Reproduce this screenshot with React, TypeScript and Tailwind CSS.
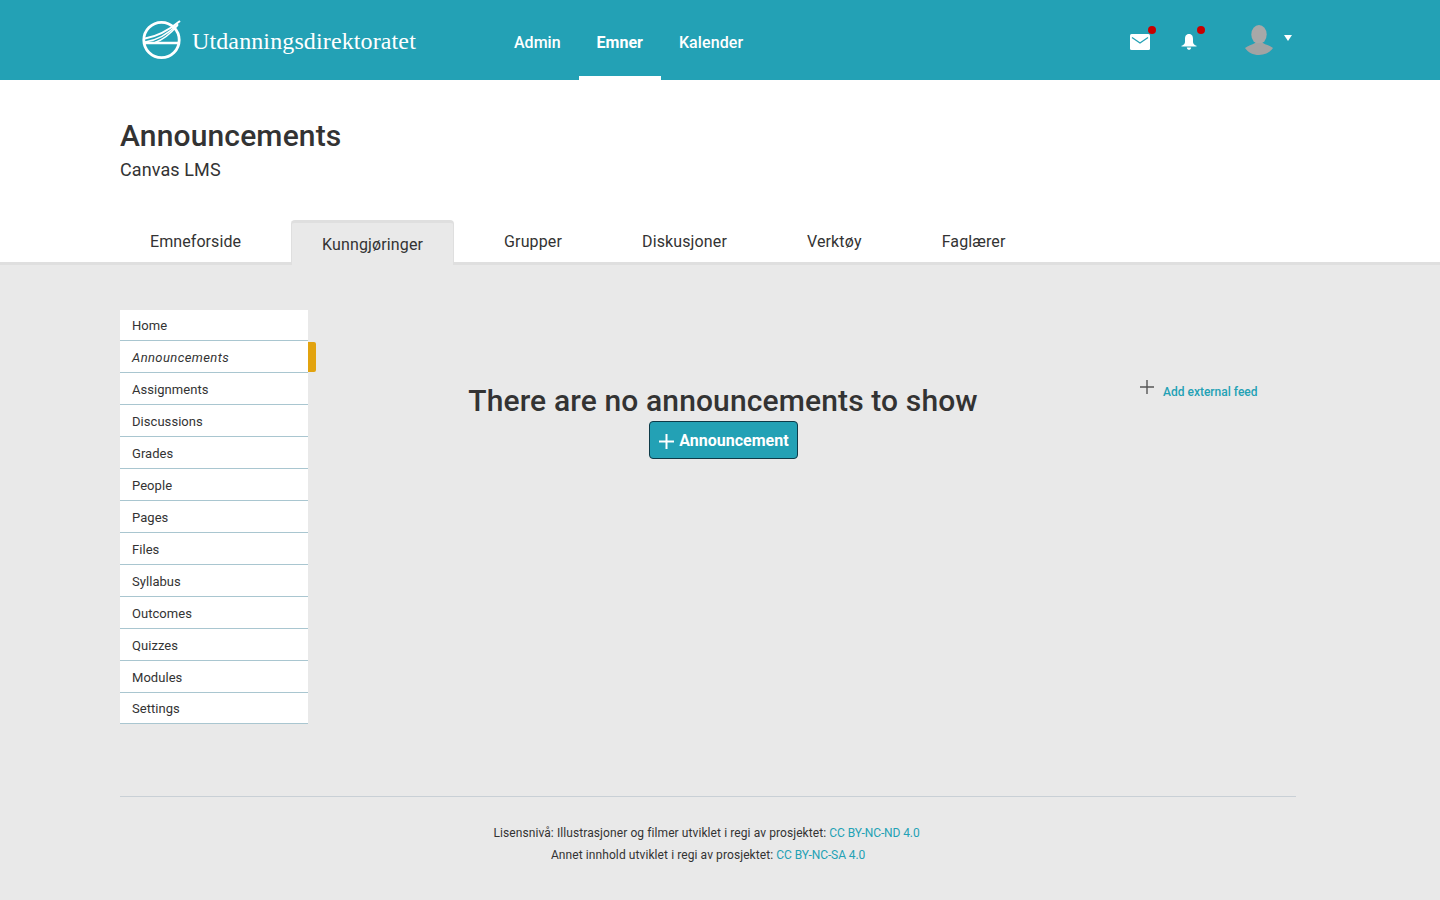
import React from 'react';

const courseLinks = ['Home', 'Announcements', 'Assignments', 'Discussions', 'Grades', 'People', 'Pages', 'Files', 'Syllabus', 'Outcomes', 'Quizzes', 'Modules', 'Settings'];
const tabs = ['Emneforside', 'Kunngjøringer', 'Grupper', 'Diskusjoner', 'Verktøy', 'Faglærer'];

const Logo = () => (
  <svg width="42" height="42" viewBox="0 0 42 42" fill="none" stroke="white">
    <circle cx="20.5" cy="21" r="17.7" strokeWidth="2.8" />
    <path d="M3 24 H38" strokeWidth="2.4" />
    <path d="M4 19.5 C16 17.5 28 11 39 2" strokeWidth="2" />
    <path d="M4 23 C16 21.5 28 14 37 5" strokeWidth="1.6" />
    <path d="M14 23.5 C23 20.5 31 13 37 6" strokeWidth="1.4" />
  </svg>
);

const MailIcon = () => (
  <svg width="20" height="16" viewBox="0 0 20 16">
    <rect width="20" height="16" rx="1.5" fill="white" />
    <path d="M2 3.5 L10 9 L18 3.5" fill="none" stroke="#23a1b5" strokeWidth="1.3" />
  </svg>
);

const BellIcon = () => (
  <svg width="16" height="16" viewBox="0 0 16 16" fill="white">
    <path d="M8 0 C4.8 0 4 2.6 4 5 V8 C4 10 2.6 11 0.5 11.8 V12.6 H15.5 V11.8 C13.4 11 12 10 12 8 V5 C12 2.6 11.2 0 8 0 Z" />
    <path d="M5.8 13.5 H10.2 C10 15 9 15.8 8 15.8 C7 15.8 6 15 5.8 13.5 Z" />
  </svg>
);

const Avatar = () => (
  <svg width="28" height="30" viewBox="0 0 28 30">
    <ellipse cx="14" cy="9.5" rx="7.7" ry="9.5" fill="#a8a8a8" />
    <path d="M0 23 C3 20.5 7 20 10 18 H18 C21 20 25 20.5 28 23 C25 27.5 20 30 14 30 C8 30 3 27.5 0 23 Z" fill="#a3a3a3" />
  </svg>
);

export default function App() {
  return (
    <div className="h-[900px] overflow-hidden flex flex-col bg-[#e9e9e9] text-[#333] font-['Roboto','Liberation_Sans',sans-serif]">
      {/* Top bar */}
      <header className="h-20 bg-[#23a1b5] shrink-0 flex text-white">
        <div className="flex items-center pl-[141px] w-[497px] shrink-0 gap-[9px]">
          <Logo />
          <span className="font-['Liberation_Serif',serif] text-[24px] tracking-[0.12px] leading-none mt-0.5">Utdanningsdirektoratet</span>
        </div>
        <nav className="flex text-[16px] font-medium">
          <a className="pl-[17px] pr-[18px] pt-[33px] leading-5">Admin</a>
          <a className="px-[18px] pt-[33px] leading-5 border-b-[4px] border-white font-bold">Emner</a>
          <a className="px-[18px] pt-[33px] leading-5 tracking-[0.1px]">Kalender</a>
        </nav>
        <div className="flex-1" />
        <div className="flex items-start pt-[25px] pr-[148px]">
          <span className="relative mt-[9px]">
            <MailIcon />
            <span className="absolute -top-[8px] left-[18px] w-2 h-2 rounded-full bg-[#c80000]" />
          </span>
          <span className="relative mt-[9px] ml-[31px]">
            <BellIcon />
            <span className="absolute -top-[8px] left-[16px] w-2 h-2 rounded-full bg-[#c80000]" />
          </span>
          <span className="ml-[48px]"><Avatar /></span>
          <span className="ml-[11px] mt-[10px] w-0 h-0 border-x-[4.5px] border-x-transparent border-t-[6px] border-t-white" />
        </div>
      </header>

      {/* Course title */}
      <div className="bg-white shrink-0 h-[185px] flex flex-col pl-[120px]">
        <h1 className="mt-[37px] text-[30px] tracking-[0.15px] leading-[38px] font-medium text-[#333]">Announcements</h1>
        <p className="mt-1 text-[18px] tracking-[0.1px] leading-[21px] text-[#333]">Canvas LMS</p>
        <div className="mt-auto flex gap-5 text-[16px] tracking-[0.13px] text-[#333] relative">
          <div className="absolute left-[-120px] w-[1440px] bottom-0 h-[3px] bg-[#dfdfdf]" />
          {tabs.map(tab =>
            tab === 'Kunngjøringer' ? (
              <span key={tab} className="relative h-[45px] px-[30px] pt-[12px] leading-5 bg-[#e9e9e9] border-t-[3px] border-x border-[#dfdfdf] rounded-t-[4px]">{tab}</span>
            ) : (
              <span key={tab} className={`h-[45px] px-[30px] pt-[12px] leading-5 ${tab === 'Emneforside' ? 'tracking-[0.08px]' : ''}`}>{tab}</span>
            )
          )}
        </div>
      </div>

      {/* Main */}
      <div className="flex flex-1 pl-[120px] pt-[45px]">
        <ul className="w-[188px] shrink-0 self-start bg-white text-[13px] tracking-[0.05px] text-[#333]">
          {courseLinks.map((link, idx) => (
            <li
              key={link}
              className={`relative flex items-center pl-3 pt-0.5 border-b border-[#a9c6d0] ${idx === 0 || idx === courseLinks.length - 1 ? 'h-[31px]' : 'h-8'} ${link === 'Announcements' ? 'italic tracking-[0.4px]' : ''}`}
            >
              {link}
              {link === 'Announcements' && (
                <span className="absolute left-full top-px h-[30px] w-2 bg-[#e2a30f] rounded-r-[2px]" />
              )}
            </li>
          ))}
        </ul>
        <div className="w-[830px] shrink-0 flex flex-col items-center pt-[72px]">
          <h2 className="text-[30px] tracking-[0.13px] leading-[38px] font-medium text-[#333] whitespace-nowrap">There are no announcements to show</h2>
          <button className="mt-px h-[38px] w-[149px] flex items-center justify-center gap-[5px] pl-[2px] rounded-[4px] border border-[#0e3a48] bg-[#23a1b5] text-white text-[16px] leading-6 font-bold">
            <svg width="15" height="15" viewBox="0 0 15 15" stroke="white" strokeWidth="2" className="mt-0.5"><path d="M7.5 0 V15 M0 7.5 H15" /></svg>
            <span className="pt-px">Announcement</span>
          </button>
        </div>
        <div className="flex items-start pt-[70px] pl-[2px]">
          <svg width="14" height="14" viewBox="0 0 14 14" stroke="#555" strokeWidth="1.4"><path d="M7 0 V14 M0 7 H14" /></svg>
          <a className="ml-[9px] mt-[4px] text-[12px] leading-[16px] font-medium text-[#23a1b5]">Add external feed</a>
        </div>
      </div>

      {/* Footer */}
      <footer className="shrink-0 h-[104px] mr-[144px] ml-[120px] border-t border-[#c9d0d6] pt-[25px] text-[12px] tracking-[0.09px] leading-[22px] text-[#333] text-center">
        <p className="pr-[3px]">Lisensnivå: Illustrasjoner og filmer utviklet i regi av prosjektet: <a className="text-[#23a1b5] tracking-[-0.1px]">CC BY-NC-ND 4.0</a></p>
        <p>Annet innhold utviklet i regi av prosjektet: <a className="text-[#23a1b5] tracking-[-0.1px]">CC BY-NC-SA 4.0</a></p>
      </footer>
    </div>
  );
}
